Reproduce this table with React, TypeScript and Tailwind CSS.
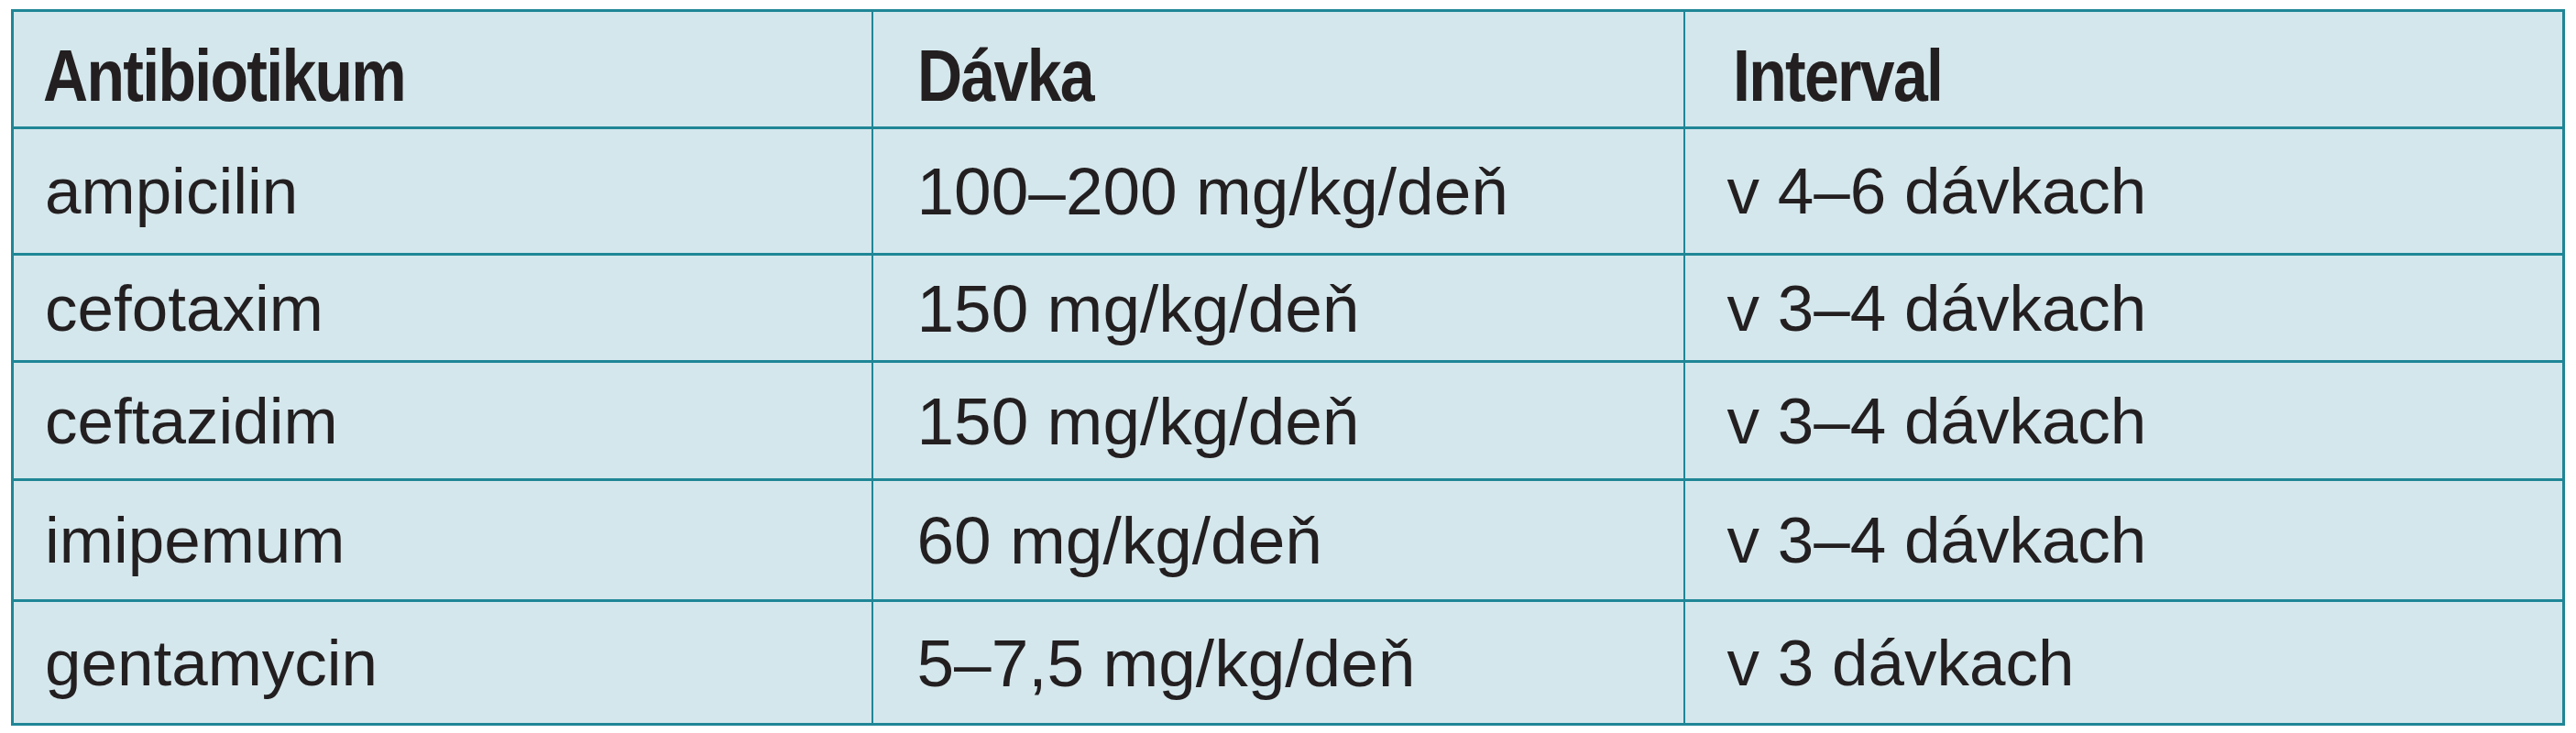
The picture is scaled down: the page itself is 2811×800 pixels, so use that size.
const rows = [
  { name: "ampicilin", dose: "100–200 mg/kg/deň", interval: "v 4–6 dávkach", h: "h-[138px]" },
  { name: "cefotaxim", dose: "150 mg/kg/deň", interval: "v 3–4 dávkach", h: "h-[117px]" },
  { name: "ceftazidim", dose: "150 mg/kg/deň", interval: "v 3–4 dávkach", h: "h-[129px]" },
  { name: "imipemum", dose: "60 mg/kg/deň", interval: "v 3–4 dávkach", h: "h-[132px]" },
  { name: "gentamycin", dose: "5–7,5 mg/kg/deň", interval: "v 3 dávkach", h: "h-[135px]" },
];

// header labels are set in a condensed bold face in the source
function HeadLabel({ children }: { children: string }) {
  return (
    <span className="inline-block origin-left scale-x-[0.85] tracking-[-2px]">
      {children}
    </span>
  );
}

export default function App() {
  return (
    <div className="min-h-screen bg-white pt-[10px] pl-[12px]">
      <table className="w-[2787px] table-fixed border-collapse border-[3px] border-[#1f8696] bg-[#d4e7ec] text-[#231f20] font-['Liberation_Sans',Arial,sans-serif]">
        <colgroup>
          <col className="w-[938px]" />
          <col className="w-[886px]" />
          <col />
        </colgroup>
        <thead>
          <tr className="h-[128px] border-b-[3px] border-[#1f8696]">
            <th className="pl-[32px] pt-[14px] text-left text-[80px] font-bold leading-none">
              <HeadLabel>Antibiotikum</HeadLabel>
            </th>
            <th className="border-l-2 border-[#1f8696] pl-[48px] pt-[14px] text-left text-[80px] font-bold leading-none">
              <HeadLabel>Dávka</HeadLabel>
            </th>
            <th className="border-l-2 border-[#1f8696] pl-[52px] pt-[14px] text-left text-[80px] font-bold leading-none">
              <HeadLabel>Interval</HeadLabel>
            </th>
          </tr>
        </thead>
        <tbody>
          {rows.map((r) => (
            <tr key={r.name} className={`${r.h} border-b-[3px] border-[#1f8696]`}>
              <td className="pl-[34px] text-[71px] leading-none">{r.name}</td>
              <td className="border-l-2 border-[#1f8696] pl-[48px] text-[73px] leading-none">{r.dose}</td>
              <td className="border-l-2 border-[#1f8696] pl-[46px] text-[71px] leading-none">{r.interval}</td>
            </tr>
          ))}
        </tbody>
      </table>
    </div>
  );
}
